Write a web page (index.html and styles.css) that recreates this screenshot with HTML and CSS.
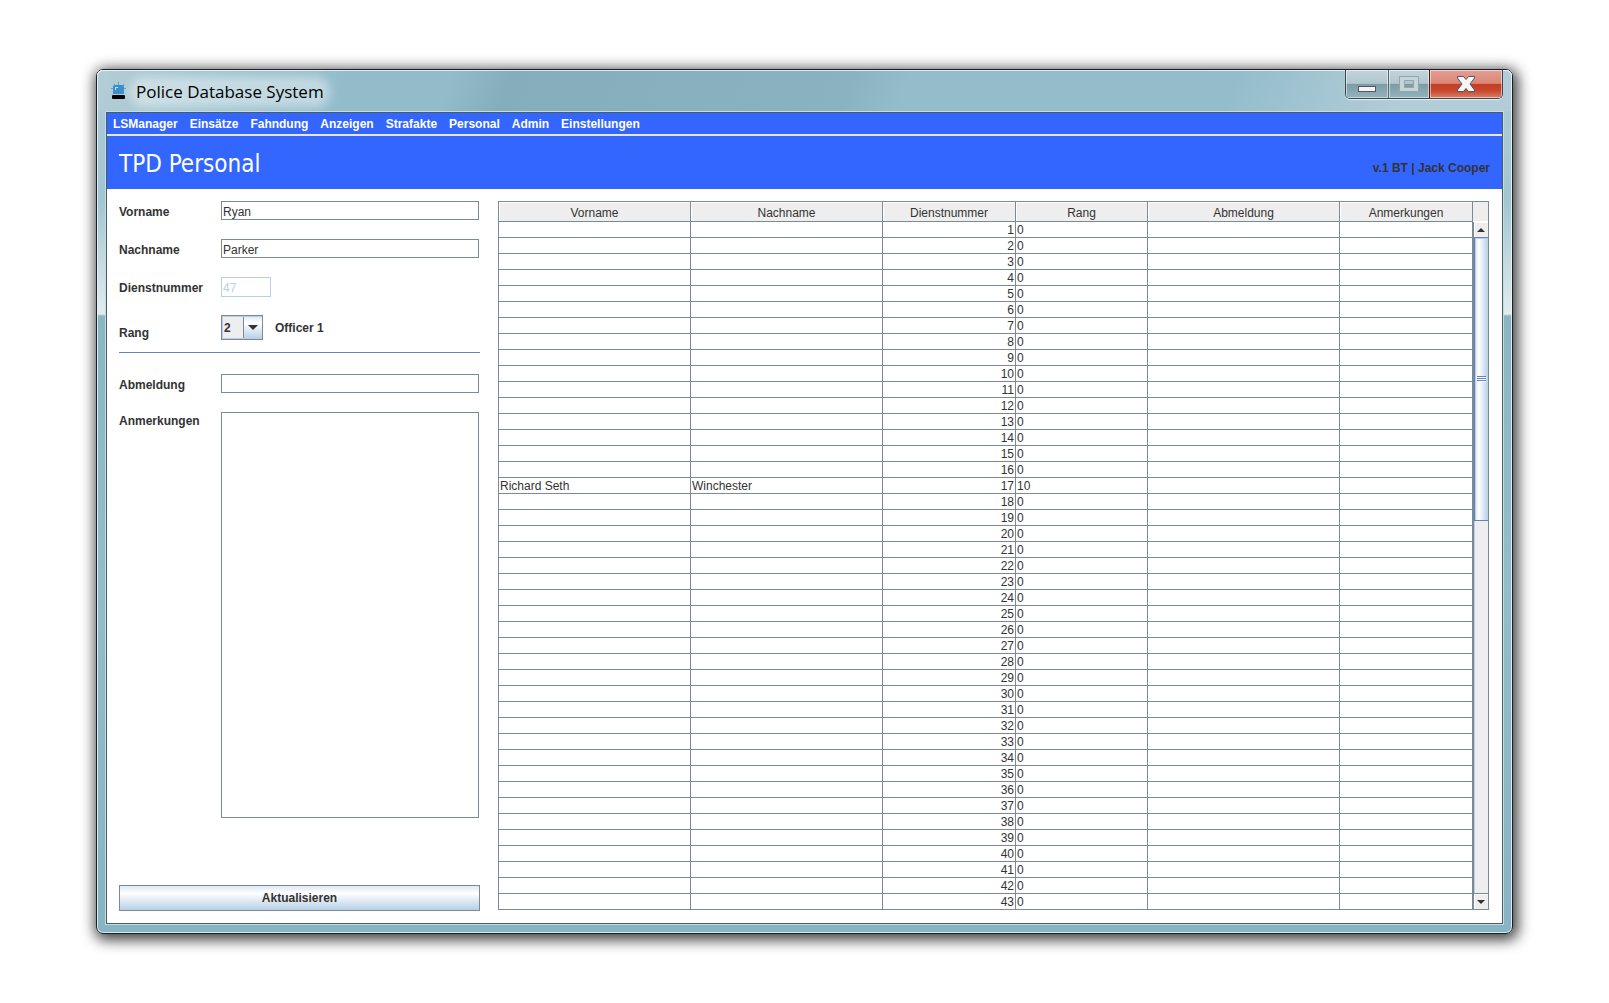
FILE: index.html
```html
<!DOCTYPE html>
<html lang="de">
<head>
  <meta charset="UTF-8">
  <meta name="viewport" content="width=device-width, initial-scale=1.0">
  <title>Police Database System</title>
  <link rel="stylesheet" href="styles.css">
</head>
<body>
<div class="window">
  <header class="titlebar">
    <svg class="app-icon" width="16" height="18" viewBox="0 0 16 18">
      <path d="M7 0h1v4H7zM3 2h1v2H3zM12 2h1v2h-1zM0 6h3v1H0zM12 6h3v1h-3z" fill="#5ba3d2"/>
      <path d="M2 5q0-2 2-2h7q2 0 2 2v7H2z" fill="#3a8fcb"/>
      <path d="M4 5h3v1H5v2H4z" fill="#b9dcf2"/>
      <rect x="1" y="13" width="13" height="4" rx="1" fill="#000"/>
    </svg>
    <span class="title">Police Database System</span>
    <div class="window-buttons">
      <button class="win-btn minimize" aria-label="Minimieren">
        <svg width="20" height="18" viewBox="0 0 20 18">
          <rect x="1.5" y="11.5" width="17" height="5" fill="#f4f4f4" stroke="#535666"/>
        </svg>
      </button>
      <button class="win-btn maximize" aria-label="Maximieren" disabled>
        <svg width="20" height="18" viewBox="0 0 20 18">
          <path d="M.5 1.500h19v15H.5zM5.500 5.500v7h9v-7z" fill="#c4d4d8" fill-rule="evenodd" stroke="#92a5ab"/>
        </svg>
      </button>
      <button class="win-btn close" aria-label="Schließen">
        <svg width="20" height="18" viewBox="0 0 20 18">
          <path d="M1.500 1.500h6l2.500 3 2.500-3h6v1.500L14 9l4.500 6v1.500h-6l-2.500-3-2.500 3h-6V15L6 9 1.500 3z" fill="#f6f6f6" stroke="#535666" stroke-linejoin="round"/>
        </svg>
      </button>
    </div>
  </header>

  <main class="client">
    <nav class="menubar">
      <a href="#">LSManager</a>
      <a href="#">Einsätze</a>
      <a href="#">Fahndung</a>
      <a href="#">Anzeigen</a>
      <a href="#">Strafakte</a>
      <a href="#">Personal</a>
      <a href="#">Admin</a>
      <a href="#">Einstellungen</a>
    </nav>

    <div class="banner">
      <h1>TPD Personal</h1>
      <span class="user">v.1 BT | Jack Cooper</span>
    </div>

    <div class="content">
      <form class="form">
        <div class="row">
          <label for="vorname">Vorname</label>
          <input class="field" id="vorname" type="text" value="Ryan">
        </div>
        <div class="row">
          <label for="nachname">Nachname</label>
          <input class="field" id="nachname" type="text" value="Parker">
        </div>
        <div class="row">
          <label for="dienstnummer">Dienstnummer</label>
          <input class="field short" id="dienstnummer" type="text" value="47" disabled>
        </div>
        <div class="row rank-row">
          <label for="rang">Rang</label>
          <div class="combo">
            <select id="rang">
              <option>1</option>
              <option selected>2</option>
              <option>3</option>
            </select>
            <svg class="combo-arrow" width="10" height="5" viewBox="0 0 10 5"><path d="M0 0h10L5 5z" fill="#333"/></svg>
          </div>
          <span class="rank-name">Officer 1</span>
        </div>
        <hr class="separator">
        <div class="row">
          <label for="abmeldung">Abmeldung</label>
          <input class="field" id="abmeldung" type="text">
        </div>
        <div class="row notes-row">
          <label for="anmerkungen">Anmerkungen</label>
          <textarea class="field" id="anmerkungen"></textarea>
        </div>
        <button class="submit" type="button">Aktualisieren</button>
      </form>

      <div class="table-pane">
        <table class="staff">
          <colgroup>
            <col class="col-name"><col class="col-name"><col class="col-number">
            <col class="col-rank"><col class="col-name"><col class="col-number">
          </colgroup>
          <thead>
            <tr>
              <th>Vorname</th><th>Nachname</th><th>Dienstnummer</th>
              <th>Rang</th><th>Abmeldung</th><th>Anmerkungen</th>
            </tr>
          </thead>
          <tbody id="staffRows"></tbody>
        </table>
        <div class="scroll">
          <div class="scroll-corner"></div>
          <button class="scroll-btn up" aria-label="Nach oben">
            <svg width="8" height="4" viewBox="0 0 8 4"><path d="M0 4L4 0l4 4z" fill="#333"/></svg>
          </button>
          <div class="scroll-track">
            <div class="scroll-thumb"><span class="grip"></span></div>
          </div>
          <button class="scroll-btn down" aria-label="Nach unten">
            <svg width="8" height="4" viewBox="0 0 8 4"><path d="M0 0h8L4 4z" fill="#333"/></svg>
          </button>
        </div>
      </div>
    </div>
  </main>
</div>
<script src="script.js"></script>
</body>
</html>
```

FILE: styles.css
```css
* {
  box-sizing: border-box;
}

body {
  margin: 0;
  min-height: 100vh;
  padding: 69px 96px;
  display: flex;
  background: #fff;
  color: #333;
  font: 12px/14px "Liberation Sans", Arial, sans-serif;
}

button {
  padding: 0;
  font: inherit;
  color: inherit;
}

svg {
  display: block;
}

/* Window frame */
.window {
  flex: 1;
  display: flex;
  flex-direction: column;
  padding: 0 9px 9px;
  border: 1px solid #15202a;
  border-radius: 7px;
  background: linear-gradient(#b0cbd5, #a2c5d1 130px, #e2ecef 244px, #8ab6c4 246px, #94bdcb 60%, #88b3c2);
  box-shadow: inset 0 0 0 1px rgba(235, 248, 250, 0.8), 2px 3px 14px 3px rgba(0, 0, 0, 0.75);
}

.titlebar {
  display: flex;
  align-items: flex-start;
  height: 41px;
  margin: 0 -9px;
  padding: 0 9px 0 14px;
  border-radius: 6px 6px 0 0;
  background: linear-gradient(110deg, #b5cdd7, #a3c5d1 7%, #93bccb 18%, #93bccb 25%, #84aebc 29%, #8ab3c2 53%, #93bdcb 57%, #94bdcb 80%, #b2cdd7 92%);
  box-shadow: inset 0 1px rgba(240, 250, 252, 0.8), inset 1px 0 rgba(240, 250, 252, 0.8), inset -1px 0 rgba(240, 250, 252, 0.8);
}

.app-icon {
  margin-top: 12px;
}

.title {
  margin: 12px 0 0 9px;
  border-radius: 8px;
  background: rgba(255, 255, 255, 0.4);
  box-shadow: 0 0 10px 6px rgba(255, 255, 255, 0.4);
  color: #000;
  font: 17px/20px "Open Sans", "Noto Sans", sans-serif;
}

.window-buttons {
  display: flex;
  margin-left: auto;
  border: 1px solid #39474f;
  border-top: 0;
  border-radius: 0 0 5px 5px;
  box-shadow: 0 1px 1px rgba(255, 255, 255, 0.7);
  overflow: hidden;
}

.win-btn {
  display: flex;
  align-items: center;
  justify-content: center;
  height: 28px;
  border: 0;
  box-shadow: inset 0 0 0 1px rgba(255, 255, 255, 0.5);
  background: linear-gradient(#c3d5db, #b0c6ce 48%, #7c9ba5 50%, #92b3bd);
}

.minimize {
  width: 42px;
}

.maximize {
  width: 41px;
  border-left: 1px solid #54666e;
}

.close {
  width: 73px;
  border-left: 1px solid #4b1a16;
  background: linear-gradient(#e2a093, #dc8473 48%, #c33a22 50%, #c84a30 75%, #d8806a);
}

.client {
  flex: 1;
  display: flex;
  flex-direction: column;
  border: 1px solid #465d66;
  outline: 1px solid #c4dde0;
  margin-top: 1px;
  background: #fff;
}

/* Menu and heading */
.menubar {
  display: flex;
  gap: 12px;
  height: 23px;
  padding: 4px 6px 0;
  border-bottom: 2px solid #e6e6e6;
  background: #36f;
}

.menubar a {
  color: #fff;
  font-weight: bold;
  text-decoration: none;
}

.banner {
  display: flex;
  align-items: center;
  justify-content: space-between;
  height: 53px;
  padding: 0 12px;
  background: #36f;
}

.banner h1 {
  margin: 0;
  padding-top: 2px;
  color: #fff;
  font: 24px/28px "DejaVu Sans Condensed", "Noto Sans", sans-serif;
}

.user {
  padding-top: 10px;
  font-weight: bold;
}

.content {
  flex: 1;
  display: flex;
  gap: 18px;
  padding: 12px 13px 12px 12px;
}

/* Form */
.form {
  flex: 0 0 361px;
  display: flex;
  flex-direction: column;
  font-weight: bold;
}

.row {
  display: flex;
  align-items: center;
  margin-bottom: 19px;
  padding-right: 1px;
}

.row label {
  flex: 0 0 102px;
  padding-top: 2px;
}

.field {
  flex: 1;
  min-width: 0;
  height: 19px;
  padding: 2px 1px 0;
  border: 1px solid #7a8a99;
  border-radius: 0;
  background: #fff;
  color: #333;
  font: 12px/14px "Liberation Sans", Arial, sans-serif;
}

.field.short {
  flex: 0 0 50px;
  height: 20px;
}

.field:disabled {
  border-color: #b8cfe5;
  color: #b8cfe5;
}

.rank-row {
  align-items: flex-end;
  margin: -1px 0 12px;
}

.combo {
  display: grid;
  align-items: center;
  width: 42px;
  height: 25px;
}

.combo select {
  grid-area: 1 / 1;
  width: 42px;
  height: 25px;
  padding: 0 2px;
  appearance: none;
  border: 1px solid #7a8a99;
  border-radius: 0;
  background:
    linear-gradient(#7a8a99, #7a8a99) 21px 0 / 1px 100% no-repeat,
    linear-gradient(#dde8f3, #fff 30%, #b8cfe5) right / 18px 100% no-repeat,
    #eee;
  box-shadow: inset 1px 1px #b8cfe5, inset 0 -1px #b8cfe5;
  color: #333;
  font: bold 12px/14px "Liberation Sans", Arial, sans-serif;
}

.combo-arrow {
  grid-area: 1 / 1;
  justify-self: end;
  margin-right: 5px;
  pointer-events: none;
}

.rank-name {
  align-self: center;
  margin-left: 12px;
}

.separator {
  width: 100%;
  margin: 0 0 21px;
  border: 0;
  border-top: 1px solid #6382bf;
}

.notes-row {
  flex: 1;
  align-items: stretch;
  margin-bottom: 67px;
}

.notes-row .field {
  height: auto;
  resize: none;
}

.submit {
  height: 26px;
  border: 1px solid #7a8a99;
  background: linear-gradient(#dde8f3, #fff 30%, #b8cfe5);
  font-weight: bold;
}

/* Staff table */
.table-pane {
  flex: 1;
  display: flex;
  align-self: flex-start;
  border: 1px solid #7a8a99;
  border-bottom: 0;
}

.staff {
  flex: 1;
  table-layout: fixed;
  border-spacing: 0;
}

.col-name {
  width: 192px;
}

.col-number {
  width: 133px;
}

.col-rank {
  width: 132px;
}

.staff th,
.staff td {
  border-right: 1px solid #7a8a99;
  border-bottom: 1px solid #7a8a99;
  white-space: nowrap;
}

.staff th {
  height: 20px;
  padding: 2px 0 0;
  background: #eee;
  box-shadow: inset 1px 1px #fff;
  font-weight: normal;
}

.staff td {
  height: 16px;
  padding: 1px 1px 0;
  line-height: 14px;
}

.staff .number {
  text-align: right;
}

.scroll {
  flex: 0 0 15px;
  display: flex;
  flex-direction: column;
  border-bottom: 1px solid #7a8a99;
  background: #eee;
}

.scroll-corner {
  height: 20px;
  border-bottom: 1px solid #fff;
}

.scroll-btn {
  display: flex;
  align-items: center;
  justify-content: center;
  height: 15px;
  border: 0;
  border-left: 1px solid #7a8a99;
  background: #eee;
  box-shadow: inset 1px 1px #fff;
}

.scroll-btn.down {
  border-top: 1px solid #7a8a99;
  height: 16px;
}

.scroll-track {
  flex: 1;
  border-left: 1px solid #7a8a99;
  box-shadow: inset 1px 1px #b8cfe5;
}

.scroll-thumb {
  display: flex;
  align-items: center;
  justify-content: center;
  height: 284px;
  border: solid #6382bf;
  border-width: 1px 0 1px 1px;
  background: linear-gradient(90deg, #dde8f3, #fff 30%, #b8cfe5);
  box-shadow: inset 1px 1px #b8cfe5;
}

.grip {
  width: 9px;
  height: 6px;
  background: repeating-linear-gradient(#6382bf 0 1px, #fff 1px 2px);
}
```

FILE: script.js
```javascript
const rowCount = 43;
const staff = {
  17: { vorname: 'Richard Seth', nachname: 'Winchester', rang: 10 }
};

const rows = document.getElementById('staffRows');

for (let nr = 1; nr <= rowCount; nr++) {
  const person = staff[nr] || { vorname: '', nachname: '', rang: 0 };
  const row = rows.insertRow();
  [person.vorname, person.nachname, nr, person.rang, '', ''].forEach(value => {
    row.insertCell().textContent = value;
  });
  row.cells[2].className = 'number';
}
```
